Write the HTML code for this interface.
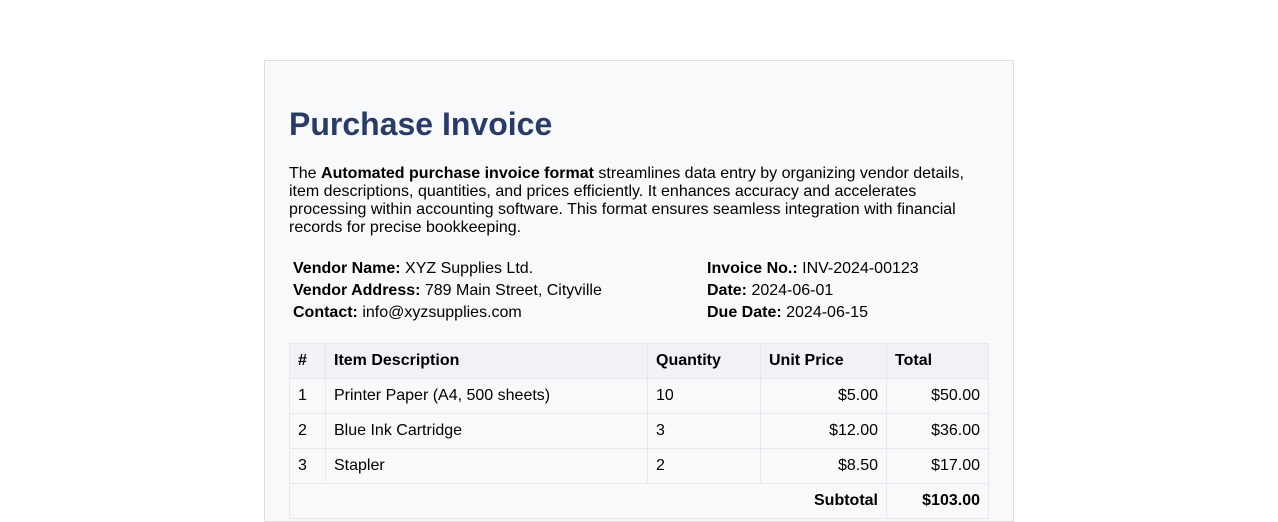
<!DOCTYPE html>
<html><head><style>
body{margin:0;background:#fff;font-family:"Liberation Sans",Arial,sans-serif;color:#000;}
.c{position:absolute;left:264px;top:60px;width:748px;height:460px;background:#f8f9fa;border:1px solid #ddd;}
h1{position:absolute;left:24px;top:43px;margin:0;font-size:32px;color:#2a3b66;line-height:40px;}
p{position:absolute;left:24px;top:104px;width:700px;margin:0;font-size:16px;line-height:18px;}
.info{position:absolute;top:197px;font-size:16px;line-height:22px;}
table{position:absolute;left:24px;top:282px;border-collapse:collapse;font-size:16px;}
td,th{border:1px solid #e6e8eb;height:34px;padding:0 8px;text-align:left;}
th{background:#f0f2f5;}
.r{text-align:right;}
</style></head><body>
<div class="c">
<h1>Purchase Invoice</h1>
<p>The <b>Automated purchase invoice format</b> streamlines data entry by organizing vendor details, item descriptions, quantities, and prices efficiently. It enhances accuracy and accelerates processing within accounting software. This format ensures seamless integration with financial records for precise bookkeeping.</p>
<div class="info" style="left:28px"><b>Vendor Name:</b> XYZ Supplies Ltd.<br><b>Vendor Address:</b> 789 Main Street, Cityville<br><b>Contact:</b> info@xyzsupplies.com</div>
<div class="info" style="left:442px"><b>Invoice No.:</b> INV-2024-00123<br><b>Date:</b> 2024-06-01<br><b>Due Date:</b> 2024-06-15</div>
<table>
<tr><th style="width:19px">#</th><th style="width:305px">Item Description</th><th style="width:96px">Quantity</th><th style="width:109px">Unit Price</th><th style="width:85px">Total</th></tr>
<tr><td>1</td><td>Printer Paper (A4, 500 sheets)</td><td>10</td><td class="r">$5.00</td><td class="r">$50.00</td></tr>
<tr><td>2</td><td>Blue Ink Cartridge</td><td>3</td><td class="r">$12.00</td><td class="r">$36.00</td></tr>
<tr><td>3</td><td>Stapler</td><td>2</td><td class="r">$8.50</td><td class="r">$17.00</td></tr>
<tr><td colspan="4" class="r"><b>Subtotal</b></td><td class="r"><b>$103.00</b></td></tr>
</table>
</div>
</body></html>
